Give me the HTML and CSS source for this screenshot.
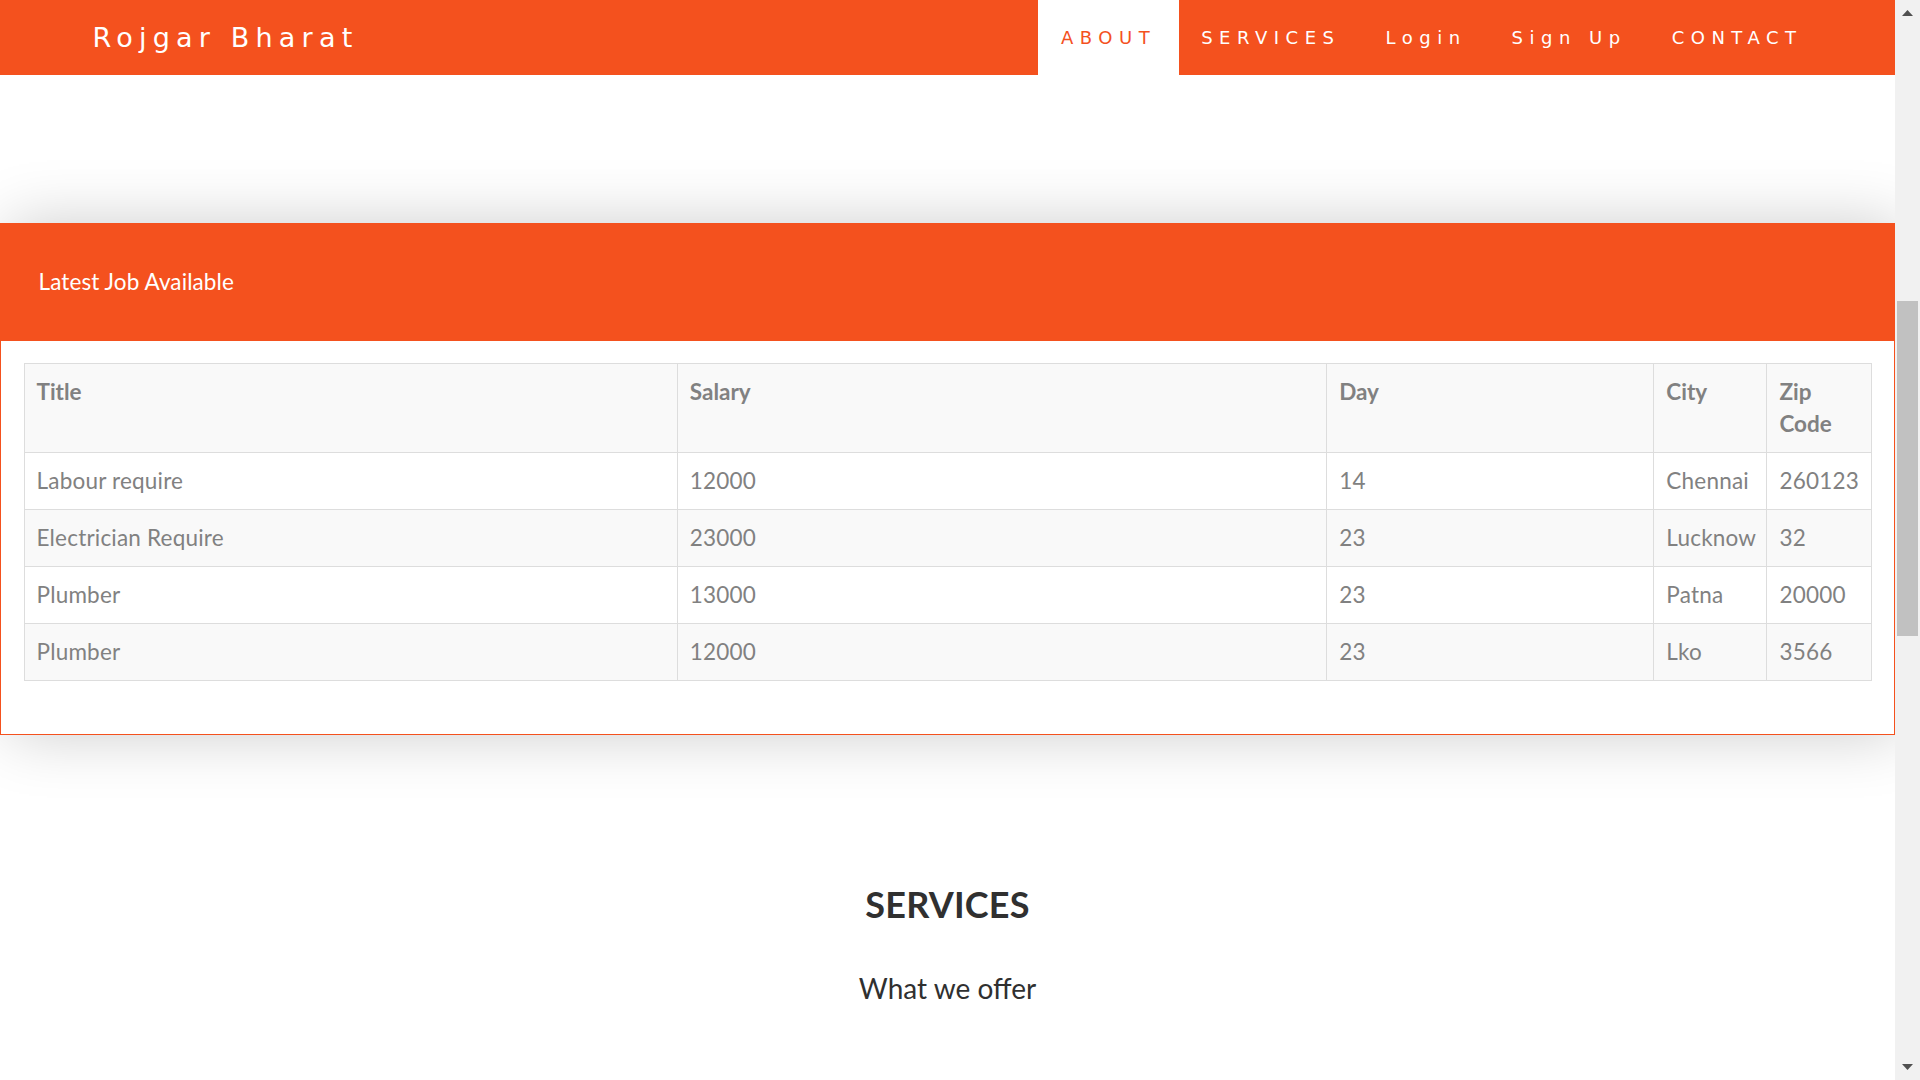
FILE: index.html
```html
<!DOCTYPE html>
<html lang="en">
<head>
<meta charset="utf-8">
<title>Rojgar Bharat</title>
<link rel="stylesheet" href="styles.css">
</head>
<body>
<div class="window">
  <div class="page">
    <nav class="navbar">
      <div class="nav-container">
        <a class="brand" href="#">Rojgar Bharat</a>
        <ul class="nav-links">
          <li class="active"><a href="#">ABOUT</a></li>
          <li><a href="#">SERVICES</a></li>
          <li><a href="#">Login</a></li>
          <li><a href="#">Sign Up</a></li>
          <li><a href="#">CONTACT</a></li>
        </ul>
      </div>
    </nav>

    <div class="panel">
      <div class="panel-heading">Latest Job Available</div>
      <div class="panel-body">
        <table class="jobs">
          <colgroup>
            <col class="c-title">
            <col class="c-salary">
            <col class="c-day">
            <col class="c-city">
            <col class="c-zip">
          </colgroup>
          <tbody>
            <tr><th>Title</th><th>Salary</th><th>Day</th><th>City</th><th>Zip Code</th></tr>
            <tr><td>Labour require</td><td>12000</td><td>14</td><td>Chennai</td><td>260123</td></tr>
            <tr><td>Electrician Require</td><td>23000</td><td>23</td><td>Lucknow</td><td>32</td></tr>
            <tr><td>Plumber</td><td>13000</td><td>23</td><td>Patna</td><td>20000</td></tr>
            <tr><td>Plumber</td><td>12000</td><td>23</td><td>Lko</td><td>3566</td></tr>
          </tbody>
        </table>
      </div>
    </div>

    <section class="services">
      <h2>Services</h2>
      <h4>What we offer</h4>
    </section>
  </div>

  <div class="scrollbar">
    <div class="sb-btn">
      <svg width="11" height="6" viewBox="0 0 11 6"><polygon points="5.5,0 11,6 0,6" fill="#505050"/></svg>
    </div>
    <div class="sb-track"><div class="sb-thumb"></div></div>
    <div class="sb-btn sb-btn-down">
      <svg width="11" height="6" viewBox="0 0 11 6"><polygon points="0,0 11,0 5.5,6" fill="#505050"/></svg>
    </div>
  </div>
</div>
</body>
</html>
```

FILE: styles.css
```css
* { box-sizing: border-box; }

html, body {
  margin: 0;
  padding: 0;
  height: 1080px;
  overflow: hidden;
  background: #fff;
}

body {
  font-family: Lato, "Open Sans", sans-serif;
  font-size: 22.5px;
  color: #818181;
}

.window {
  display: flex;
  height: 1080px;
}

.page {
  flex: 1;
  min-width: 0;
  overflow: hidden;
}

/* Navbar */
.navbar {
  background: #f4511e;
  height: 75px;
  font-family: "DejaVu Sans", Verdana, sans-serif;
}

.nav-container {
  width: 1755px;
  margin: 0 auto;
  padding-left: 22.5px;
  display: flex;
  justify-content: space-between;
}

.brand {
  display: block;
  font-size: 27px;
  letter-spacing: 6.2px;
  line-height: 30px;
  padding: 22.5px 0;
  color: #fff;
  text-decoration: none;
}

.nav-links {
  display: flex;
  list-style: none;
  margin: 0;
  padding: 0;
}

.nav-links a {
  display: block;
  font-size: 18px;
  letter-spacing: 6.5px;
  line-height: 30px;
  padding: 22.5px;
  color: #fff;
  text-decoration: none;
}

.nav-links .active a {
  background: #fff;
  color: #f4511e;
}

/* Panel */
.panel {
  margin-top: 148px;
  margin-bottom: 30px;
  border: 1px solid #f4511e;
  background: #fff;
  box-shadow: 7.5px 0 60px rgba(0, 0, 0, 0.2);
}

.panel-heading {
  background: #f4511e;
  color: #fff;
  padding: 37.5px;
  line-height: 40.5px;
  letter-spacing: 0.1px;
  border-bottom: 1px solid transparent;
}

.panel-body {
  padding: 22.5px;
}

.jobs {
  width: 100%;
  table-layout: fixed;
  border-collapse: collapse;
  border: 1px solid #ddd;
  margin-bottom: 30px;
}

.c-title { width: 653px; }
.c-salary { width: 649px; }
.c-day { width: 327px; }
.c-city { width: 113px; }
.c-zip { width: 104px; }

.jobs th,
.jobs td {
  padding: 12px;
  line-height: 32px;
  vertical-align: top;
  text-align: left;
  border: 1px solid #ddd;
}

.jobs td {
  letter-spacing: 0.2px;
}

.jobs th {
  font-weight: 700;
}

.jobs tr:nth-child(odd) {
  background: #f9f9f9;
}

/* Services */
.services {
  padding: 90px 75px 0;
  text-align: center;
  color: #303030;
}

.services h2 {
  margin: 30px 0 45px;
  font-size: 36px;
  line-height: 39.6px;
  font-weight: 700;
  letter-spacing: 0.2px;
  text-transform: uppercase;
}

.services h4 {
  margin: 0;
  font-size: 28px;
  line-height: 39.2px;
  font-weight: 400;
}

/* Scrollbar */
.scrollbar {
  width: 25px;
  flex: none;
  background: #f1f1f1;
  display: flex;
  flex-direction: column;
}

.sb-btn {
  height: 25px;
  display: flex;
  justify-content: center;
  padding-top: 10px;
}

.sb-btn-down {
  padding-top: 9px;
}

.sb-track {
  flex: 1;
  padding: 0 2px;
}

.sb-thumb {
  margin-top: 276px;
  height: 335px;
  background: #c1c1c1;
}
```
